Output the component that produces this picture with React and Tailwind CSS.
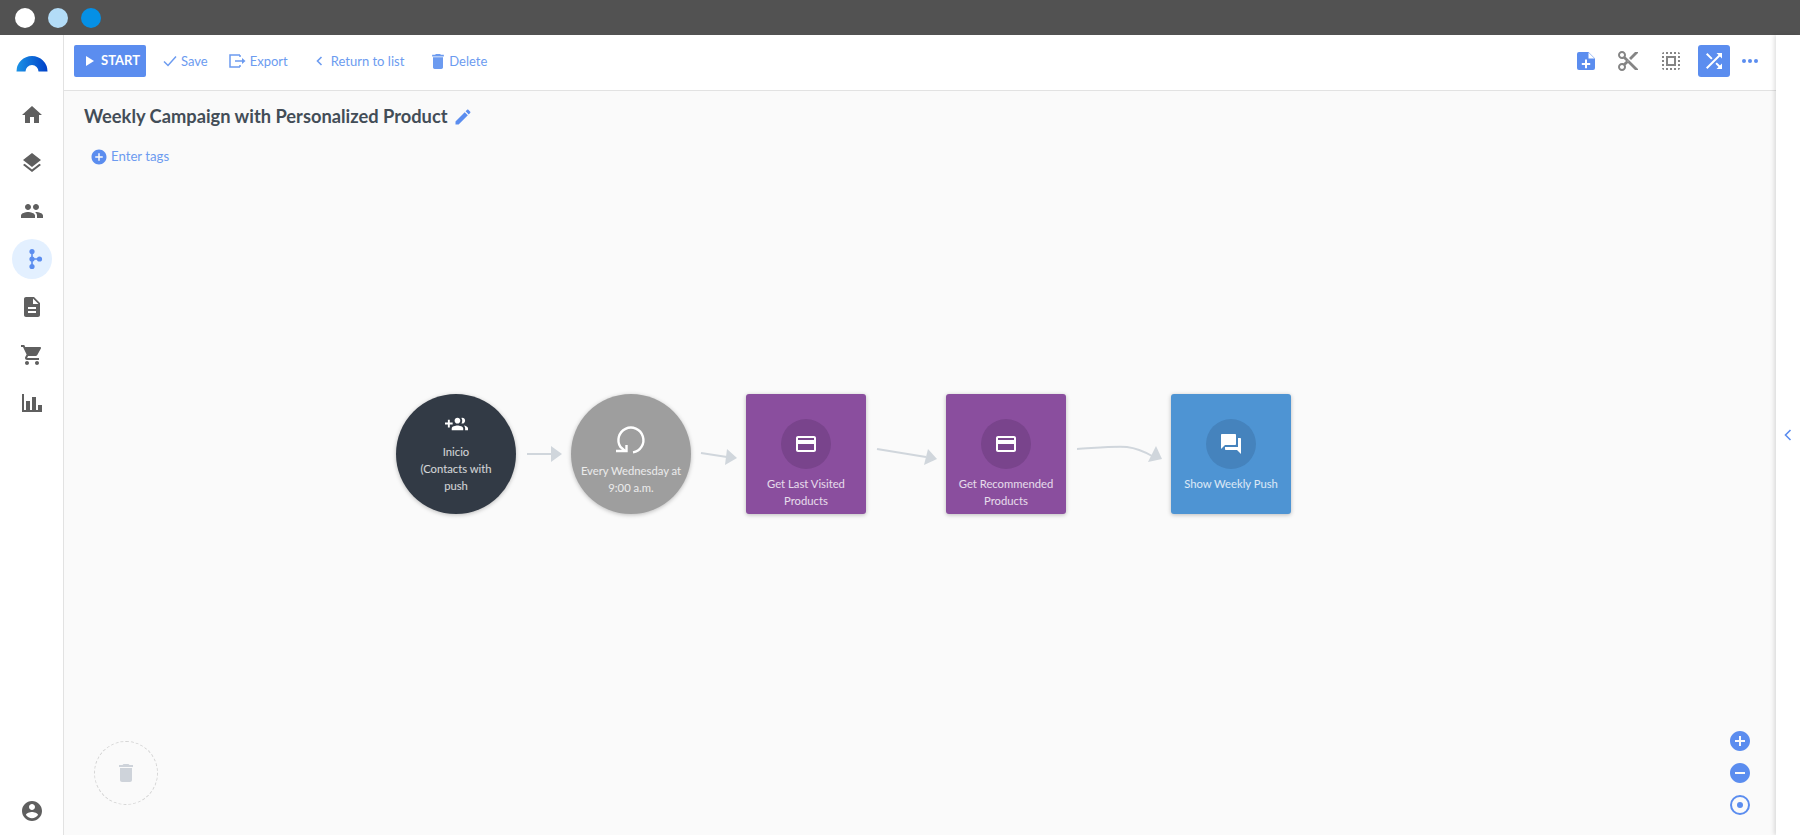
import React from 'react'

const Icon = ({ d, className = '', viewBox = '0 0 24 24' }) => (
  <svg viewBox={viewBox} className={className} fill="currentColor">
    <path d={d} />
  </svg>
)

const paths = {
  home: 'M10 20v-6h4v6h5v-8h3L12 3 2 12h3v8z',
  layers: 'M11.99 18.54l-7.37-5.73L3 14.07l9 7 9-7-1.63-1.27-7.38 5.74zM12 16l7.36-5.73L21 9l-9-7-9 7 1.63 1.27L12 16z',
  people: 'M16 11c1.66 0 2.99-1.34 2.99-3S17.66 5 16 5c-1.66 0-3 1.34-3 3s1.34 3 3 3zm-8 0c1.66 0 2.99-1.34 2.99-3S9.66 5 8 5C6.34 5 5 6.34 5 8s1.34 3 3 3zm0 2c-2.33 0-7 1.17-7 3.5V19h14v-2.5c0-2.33-4.67-3.5-7-3.5zm8 0c-.29 0-.62.02-.97.05 1.16.84 1.97 1.97 1.97 3.45V19h6v-2.5c0-2.33-4.67-3.5-7-3.5z',
  doc: 'M14 2H6c-1.1 0-1.99.9-1.99 2L4 20c0 1.1.89 2 1.99 2H18c1.1 0 2-.9 2-2V8l-6-6zm2 16H8v-2h8v2zm0-4H8v-2h8v2zm-3-5V3.5L18.5 9H13z',
  cart: 'M7 18c-1.1 0-1.99.9-1.99 2S5.9 22 7 22s2-.9 2-2-.9-2-2-2zM1 2v2h2l3.6 7.59-1.35 2.45c-.16.28-.25.61-.25.96 0 1.1.9 2 2 2h12v-2H7.42c-.14 0-.25-.11-.25-.25l.03-.12.9-1.63h7.45c.75 0 1.41-.41 1.75-1.03l3.58-6.49c.08-.14.12-.31.12-.48 0-.55-.45-1-1-1H5.21l-.94-2H1zm16 16c-1.1 0-1.99.9-1.99 2s.89 2 1.99 2 2-.9 2-2-.9-2-2-2z',
  bars: 'M2 3h2v16h2v-9h4v9h2V6h4v13h2v-5h4v7H2z',
  account: 'M12 2C6.48 2 2 6.48 2 12s4.48 10 10 10 10-4.48 10-10S17.52 2 12 2zm0 3c1.66 0 3 1.34 3 3s-1.34 3-3 3-3-1.34-3-3 1.34-3 3-3zm0 14.2c-2.5 0-4.71-1.28-6-3.22.03-1.99 4-3.08 6-3.08 1.99 0 5.97 1.09 6 3.08-1.29 1.94-3.5 3.22-6 3.22z',
  trash: 'M6 19c0 1.1.9 2 2 2h8c1.1 0 2-.9 2-2V7H6v12zM19 4h-3.5l-1-1h-5l-1 1H5v2h14V4z',
  edit: 'M3 17.25V21h3.75L17.81 9.94l-3.75-3.75L3 17.25zM20.71 7.04c.39-.39.39-1.02 0-1.41l-2.34-2.34c-.39-.39-1.02-.39-1.41 0l-1.83 1.83 3.75 3.75 1.83-1.83z',
  card: 'M20 4H4c-1.11 0-1.99.89-1.99 2L2 18c0 1.11.89 2 2 2h16c1.11 0 2-.89 2-2V6c0-1.11-.89-2-2-2zm0 14H4v-6h16v6zm0-10H4V6h16v2z',
  forum: 'M21 6h-2v9H6v2c0 .55.45 1 1 1h11l4 4V7c0-.55-.45-1-1-1zm-4 6V3c0-.55-.45-1-1-1H3c-.55 0-1 .45-1 1v14l4-4h10c.55 0 1-.45 1-1z',
  shuffle: 'M10.59 9.17L5.41 4 4 5.41l5.17 5.17 1.42-1.41zM14.5 4l2.04 2.04L4 18.59 5.41 20 17.96 7.46 20 9.5V4h-5.5zm.33 9.41l-1.41 1.41 3.13 3.13L14.5 20H20v-5.5l-2.04 2.04-3.13-3.13z',
  cut: 'M9.64 7.64c.23-.5.36-1.05.36-1.64 0-2.21-1.79-4-4-4S2 3.79 2 6s1.79 4 4 4c.59 0 1.14-.13 1.64-.36L10 12l-2.36 2.36C7.14 14.13 6.59 14 6 14c-2.21 0-4 1.79-4 4s1.79 4 4 4 4-1.79 4-4c0-.59-.13-1.14-.36-1.64L12 14l7 7h3v-1L9.64 7.64zM6 8c-1.1 0-2-.89-2-2s.9-2 2-2 2 .89 2 2-.9 2-2 2zm0 12c-1.1 0-2-.89-2-2s.9-2 2-2 2 .89 2 2-.9 2-2 2zm6-7.5c-.28 0-.5-.22-.5-.5s.22-.5.5-.5.5.22.5.5-.22.5-.5.5zM19 3l-6 6 2 2 7-7V3z',
  select: 'M3 5h2V3c-1.1 0-2 .9-2 2zm0 8h2v-2H3v2zm4 8h2v-2H7v2zM3 9h2V7H3v2zm10-6h-2v2h2V3zm6 0v2h2c0-1.1-.9-2-2-2zM5 21v-2H3c0 1.1.9 2 2 2zm-2-4h2v-2H3v2zM9 3H7v2h2V3zm2 18h2v-2h-2v2zm8-8h2v-2h-2v2zm0 8c1.1 0 2-.9 2-2h-2v2zm0-12h2V7h-2v2zm0 8h2v-2h-2v2zm-4 4h2v-2h-2v2zm0-16h2V3h-2v2zM7 17h10V7H7v10zm2-8h6v6H9V9z',
  groupAdd: 'M8 10H5V7H3v3H0v2h3v3h2v-3h3v-2zm10 1c1.66 0 2.99-1.34 2.99-3S19.66 5 18 5c-.32 0-.63.05-.91.14.57.81.9 1.79.9 2.86s-.34 2.04-.9 2.86c.28.09.59.14.91.14zm-5 0c1.66 0 2.99-1.34 2.99-3S14.66 5 13 5c-1.66 0-3 1.34-3 3s1.34 3 3 3zm6.62 2.16c.83.73 1.38 1.66 1.38 2.84v2h3v-2c0-1.54-2.37-2.49-4.38-2.84zM13 13c-2 0-6 1-6 3v2h12v-2c0-2-4-3-6-3z',
  plusCircle: 'M12 2C6.48 2 2 6.48 2 12s4.48 10 10 10 10-4.48 10-10S17.52 2 12 2zm5 11h-4v4h-2v-4H7v-2h4V7h2v4h4v2z',
  minusCircle: 'M12 2C6.48 2 2 6.48 2 12s4.48 10 10 10 10-4.48 10-10S17.52 2 12 2zm5 11H7v-2h10v2z',
}

const navItems = [
  { d: paths.home },
  { d: paths.layers },
  { d: paths.people },
  { fork: true },
  { d: paths.doc },
  { d: paths.cart },
  { d: paths.bars },
]

const Logo = () => (
  <svg viewBox="0 0 32 17" className="w-8 h-[17px]">
    <defs>
      <linearGradient id="logo" x1="0" x2="1" y1="0" y2="0">
        <stop offset="0" stopColor="#1b93e6" />
        <stop offset="1" stopColor="#0040c8" />
      </linearGradient>
    </defs>
    <path d="M0.5 16.5a15.5 15.5 0 0 1 31 0h-9a6.5 6.5 0 0 0-13 0z" fill="url(#logo)" />
  </svg>
)

const ForkIcon = () => (
  <svg viewBox="0 0 24 24" className="w-6 h-6" fill="#5b8def" stroke="#5b8def">
    <path d="M12 5v15M12 12h7" strokeWidth="1.6" />
    <circle cx="12" cy="4.5" r="2.6" stroke="none" />
    <circle cx="12" cy="12" r="2.6" stroke="none" />
    <circle cx="12" cy="19.5" r="2.6" stroke="none" />
    <circle cx="19.5" cy="12" r="2.6" stroke="none" />
  </svg>
)

const Sidebar = () => (
  <aside className="w-[64px] shrink-0 bg-white border-r border-[#e2e2e2] flex flex-col items-center text-[#5f5f5f]">
    <div className="mt-[20px] mb-[23px] h-[17px]"><Logo /></div>
    <div className="flex flex-col items-center gap-[8px]">
      {navItems.map((item, i) => (
        <div key={i} className={`w-10 h-10 rounded-full flex items-center justify-center ${item.fork ? 'bg-[#e3f0ff]' : ''}`}>
          {item.fork ? <ForkIcon /> : <Icon d={item.d} className="w-6 h-6" />}
        </div>
      ))}
    </div>
    <div className="mt-auto mb-[12px]">
      <Icon d={paths.account} className="w-6 h-6" />
    </div>
  </aside>
)

const ToolLink = ({ icon, label, className = '' }) => (
  <button className={`flex items-center text-[13px] text-[#6c9bf0] ${className}`}>
    {icon}
    <span className="pt-px">{label}</span>
  </button>
)

const Toolbar = () => (
  <div className="h-[56px] shrink-0 bg-white border-b border-[#e2e2e2] flex items-center pl-[10px] pr-[18px] pb-[3px]">
    <button className="w-[72px] h-[32px] bg-[#5b8def] rounded-[2px] text-white text-[13px] font-bold flex items-center pl-[12px] gap-[7px]">
      <svg viewBox="0 0 8 10" className="w-2 h-2.5" fill="currentColor"><path d="M0 0l8 5-8 5z" /></svg>
      START
    </button>
    <ToolLink
      className="ml-[17px] gap-[4px]"
      label="Save"
      icon={<svg viewBox="0 0 14 12" className="w-[14px] h-3" fill="none" stroke="currentColor" strokeWidth="1.5"><path d="M1 6.5l4 4 8-9" /></svg>}
    />
    <ToolLink
      className="ml-[21px] gap-[4px]"
      label="Export"
      icon={
        <svg viewBox="0 0 17 14" className="w-[17px] h-[14px]" fill="none" stroke="currentColor" strokeWidth="1.5">
          <path d="M11 1H1v12h10M11 1v2M11 11v2M6 7h8" />
          <path d="M13 4l3.5 3-3.5 3z" fill="currentColor" stroke="none" />
        </svg>
      }
    />
    <ToolLink
      className="ml-[28px] gap-[8px]"
      label="Return to list"
      icon={<svg viewBox="0 0 7 10" className="w-[7px] h-2.5" fill="none" stroke="currentColor" strokeWidth="1.6"><path d="M5.5 1l-4 4 4 4" /></svg>}
    />
    <ToolLink
      className="ml-[28px] gap-[5px]"
      label="Delete"
      icon={<svg viewBox="5 3 14 18" className="w-3 h-[15px]" fill="currentColor"><path d={paths.trash} /></svg>}
    />
    <div className="ml-auto flex items-center">
      <svg viewBox="0 0 18 18" className="w-[18px] h-[18px] text-[#5b8def]" fill="currentColor">
        <path d="M2 0h9.5L18 6.5V16a2 2 0 0 1-2 2H2a2 2 0 0 1-2-2V2a2 2 0 0 1 2-2z" />
        <path d="M11.5 0.5V6.5H17.5z" fill="#fff" />
        <path d="M8 7.5h2V11h3.2v2H10v3.2H8V13H4.8v-2H8z" fill="#fff" />
      </svg>
      <Icon d={paths.cut} className="w-6 h-6 ml-[21px] text-[#858585]" />
      <Icon d={paths.select} className="w-6 h-6 ml-[19px] text-[#858585]" />
      <div className="w-8 h-8 ml-[15px] rounded-[3px] bg-[#5b8def] flex items-center justify-center text-white">
        <Icon d={paths.shuffle} className="w-[24px] h-[24px]" />
      </div>
      <div className="ml-[12px] flex items-center gap-[2px]">
        <span className="w-1 h-1 rounded-full bg-[#5b8def]" />
        <span className="w-1 h-1 rounded-full bg-[#5b8def]" />
        <span className="w-1 h-1 rounded-full bg-[#5b8def]" />
      </div>
    </div>
  </div>
)

const nodeText = 'text-[11.25px] leading-[17px] text-center text-white/80'

const SquareNode = ({ left, color, inner, iconD, lines }) => (
  <div
    className={`absolute top-[303px] w-[120px] h-[120px] rounded-[3px] flex flex-col items-center shadow-[0_1px_4px_rgba(0,0,0,0.25)] ${color}`}
    style={{ left }}
  >
    <div className={`mt-[25px] w-[50px] h-[50px] rounded-full flex items-center justify-center text-white ${inner}`}>
      <Icon d={iconD} className="w-6 h-6" />
    </div>
    <div className={`mt-[6px] ${nodeText}`}>
      {lines.map((l) => <div key={l}>{l}</div>)}
    </div>
  </div>
)

const Arrows = () => (
  <svg className="absolute left-0 top-0 w-[1712px] h-[744px] pointer-events-none" viewBox="64 91 1712 744" fill="none">
    <g stroke="#d0d6dc" strokeWidth="2">
      <path d="M527 454H552" />
      <path d="M701 453L727 457" />
      <path d="M877 449L926 457" />
      <path d="M1077 449C1095 448 1115 446 1127 447C1135 448 1145 452 1152 456" />
    </g>
    <g fill="#d0d6dc">
      <path d="M551 446L562 454L551 462z" />
      <path d="M727 449L737 458L725 465z" />
      <path d="M928 449L937 459L924 465z" />
      <path d="M1156 446L1162 459L1148 462z" />
    </g>
  </svg>
)

const Canvas = () => (
  <div className="relative flex-1 bg-[#fafafa]">
    <div className="pl-[20px] pt-[12px] flex items-center">
      <h1 className="text-[18.3px] leading-[26px] font-bold text-[#434d57]">Weekly Campaign with Personalized Product</h1>
      <Icon d={paths.edit} className="w-[20px] h-[20px] ml-[5px] mt-[2px] text-[#5b8def]" />
    </div>
    <div className="pl-[26px] mt-[18px] flex items-center gap-[3px] text-[13.2px] text-[#6c9bf0]">
      <Icon d={paths.plusCircle} className="w-[18px] h-[18px] text-[#5b8def]" />
      Enter tags
    </div>

    <Arrows />

    {/* Nodes */}
    <div className="absolute left-[332px] top-[303px] w-[120px] h-[120px] rounded-full bg-[#323a45] flex flex-col items-center shadow-[0_1px_4px_rgba(0,0,0,0.25)]">
      <Icon d={paths.groupAdd} className="mt-[19px] w-[23px] h-[23px] text-white" />
      <div className={`mt-[7px] ${nodeText}`}>
        <div>Inicio</div>
        <div>(Contacts with</div>
        <div>push</div>
      </div>
    </div>
    <div className="absolute left-[507px] top-[303px] w-[120px] h-[120px] rounded-full bg-[#9e9e9e] flex flex-col items-center shadow-[0_1px_4px_rgba(0,0,0,0.25)]">
      <svg viewBox="0 0 32 32" className="mt-[30px] w-8 h-8 text-white" fill="none" stroke="currentColor" strokeWidth="2.4">
        <path d="M18 28.4A12.5 12.5 0 1 0 5.5 23L10 27" />
        <path d="M1 27H11.5V21" />
      </svg>
      <div className={`mt-[6px] ${nodeText}`}>
        <div>Every Wednesday at</div>
        <div>9:00 a.m.</div>
      </div>
    </div>
    <SquareNode left={682} color="bg-[#8a4e9e]" inner="bg-[#79448c]" iconD={paths.card} lines={['Get Last Visited', 'Products']} />
    <SquareNode left={882} color="bg-[#8a4e9e]" inner="bg-[#79448c]" iconD={paths.card} lines={['Get Recommended', 'Products']} />
    <SquareNode left={1107} color="bg-[#4e94d3]" inner="bg-[#4583bd]" iconD={paths.forum} lines={['Show Weekly Push']} />

    {/* Trash drop zone */}
    <div className="absolute left-[30px] bottom-[30px] w-16 h-16 rounded-full border border-dashed border-[#d4d4d4] flex items-center justify-center text-[#ced3da]">
      <Icon d={paths.trash} className="w-6 h-6" />
    </div>

    {/* Zoom controls */}
    <div className="absolute right-[26px] bottom-[20px] flex flex-col items-center gap-[12px]">
      <svg viewBox="2 2 20 20" className="w-5 h-5 text-[#5b8def]" fill="currentColor"><path d={paths.plusCircle} /></svg>
      <svg viewBox="2 2 20 20" className="w-5 h-5 text-[#5b8def]" fill="currentColor"><path d={paths.minusCircle} /></svg>
      <div className="w-5 h-5 rounded-full border-2 border-[#5b8def] flex items-center justify-center">
        <span className="w-[6px] h-[6px] rounded-full bg-[#5b8def]" />
      </div>
    </div>
  </div>
)

const App = () => (
  <div className="h-screen w-full flex flex-col overflow-hidden bg-white font-['Lato','Liberation_Sans',sans-serif]">
    {/* Window chrome */}
    <div className="h-[35px] shrink-0 bg-[#525252] flex items-center pl-[15px] gap-[13px]">
      <span className="w-5 h-5 rounded-full bg-white" />
      <span className="w-5 h-5 rounded-full bg-[#b3dcf7]" />
      <span className="w-5 h-5 rounded-full bg-[#0590e6]" />
    </div>
    <div className="flex flex-1 min-h-0">
      <Sidebar />
      <main className="flex-1 min-w-0 flex flex-col">
        <Toolbar />
        <Canvas />
      </main>
      {/* Collapsed right panel */}
      <div className="w-[24px] shrink-0 bg-white shadow-[-2px_0_4px_rgba(0,0,0,0.12)] z-10 flex items-center justify-center">
        <svg viewBox="0 0 8 12" className="w-2 h-3 text-[#5b8def]" fill="none" stroke="currentColor" strokeWidth="1.6"><path d="M6.5 1l-5 5 5 5" /></svg>
      </div>
    </div>
  </div>
)

export default App
